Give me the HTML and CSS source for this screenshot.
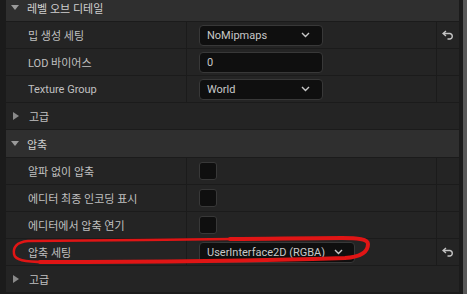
FILE: index.html
```html
<!DOCTYPE html>
<html>
<head>
    <title>Details</title>
    <link rel="stylesheet" href="styles.css">
</head>
<body>
    <div class="panel">
        <div class="details">
            <div class="section-head">
                <span class="arrow-down"></span>레벨 오브 디테일
            </div>
            <div class="prop">
                <div class="name">밉 생성 세팅</div>
                <div class="value">
                    <div class="combo">NoMipmaps<svg class="chev" width="9" height="6" viewBox="0 0 9 6"><path d="M1 1 L4.5 4.5 L8 1" /></svg></div>
                </div>
                <div class="reset">
                    <svg width="12" height="10" viewBox="0 0 12 10"><path d="M4 1 L1 3.5 L4 6 M1.5 3.5 H8 A2.8 2.8 0 0 1 8 9 H5.5" /></svg>
                </div>
            </div>
            <div class="prop">
                <div class="name">LOD 바이어스</div>
                <div class="value"><div class="combo">0</div></div>
                <div class="reset"></div>
            </div>
            <div class="prop">
                <div class="name">Texture Group</div>
                <div class="value">
                    <div class="combo">World<svg class="chev" width="9" height="6" viewBox="0 0 9 6"><path d="M1 1 L4.5 4.5 L8 1" /></svg></div>
                </div>
                <div class="reset"></div>
            </div>
            <div class="sub-head"><span class="arrow-right"></span>고급</div>

            <div class="section-head">
                <span class="arrow-down"></span>압축
            </div>
            <div class="prop">
                <div class="name">알파 없이 압축</div>
                <div class="value"><div class="check"></div></div>
                <div class="reset"></div>
            </div>
            <div class="prop">
                <div class="name">에디터 최종 인코딩 표시</div>
                <div class="value"><div class="check"></div></div>
                <div class="reset"></div>
            </div>
            <div class="prop">
                <div class="name">에디터에서 압축 연기</div>
                <div class="value"><div class="check"></div></div>
                <div class="reset"></div>
            </div>
            <div class="prop">
                <div class="name">압축 세팅</div>
                <div class="value">
                    <div class="combo wide">UserInterface2D (RGBA)<svg class="chev" width="9" height="6" viewBox="0 0 9 6"><path d="M1 1 L4.5 4.5 L8 1" /></svg></div>
                </div>
                <div class="reset">
                    <svg width="12" height="10" viewBox="0 0 12 10"><path d="M4 1 L1 3.5 L4 6 M1.5 3.5 H8 A2.8 2.8 0 0 1 8 9 H5.5" /></svg>
                </div>
            </div>
            <div class="sub-head"><span class="arrow-right"></span>고급</div>
        </div>
        <div class="scrollbar"><div class="thumb"></div></div>

        <!-- red annotation drawn over the panel -->
        <svg class="markup" width="467" height="294" viewBox="0 0 467 294">
            <path class="loop-top" d="M232 239 C170 240 80 240 28 241 C16 242 13 248 14 254 C15 260 24 262 45 262" />
            <path class="loop-bottom" d="M40 262 C120 262 250 261 345 258 C360 257 368 252 368 244 C368 239 358 238 342 238 C300 238 270 239 230 239" />
        </svg>
    </div>
</body>
</html>
```

FILE: styles.css
```css
body {
    margin: 0;
    background-color: #1b1b1b;
    font-family: Roboto, "Noto Sans CJK KR", sans-serif;
    font-size: 11px;
    color: #c0c0c0;
    overflow: hidden;
}
.panel {
    position: relative;
    display: flex;
    height: 294px;
    padding-left: 6px;
}
.details {
    width: 453px;
    margin-top: -6px;
}
.section-head {
    display: flex;
    align-items: center;
    height: 27px;
    background-color: #2f2f2f;
    border-bottom: 1px solid #1b1b1b;
    color: #cfcfcf;
}
.sub-head {
    display: flex;
    align-items: center;
    height: 26px;
    background-color: #242424;
    border-bottom: 1px solid #1b1b1b;
}
.arrow-down {
    width: 0;
    height: 0;
    margin: 0 8px 0 5px;
    border-left: 4.5px solid transparent;
    border-right: 4.5px solid transparent;
    border-top: 5px solid #9a9a9a;
}
.arrow-right {
    width: 0;
    height: 0;
    margin: 0 10px 0 7px;
    border-top: 4.5px solid transparent;
    border-bottom: 4.5px solid transparent;
    border-left: 6px solid #8a8a8a;
}
.prop {
    display: grid;
    grid-template-columns: 181px 250px 22px;
    height: 26px;
    background-color: #242424;
    border-bottom: 1px solid #1b1b1b;
}
.name {
    display: flex;
    align-items: center;
    padding-left: 22px;
    border-right: 1px solid #1b1b1b;
}
.value {
    display: flex;
    align-items: center;
    padding-left: 12px;
    border-right: 1px solid #1b1b1b;
}
.reset {
    display: flex;
    align-items: center;
    justify-content: center;
}
.reset svg path {
    fill: none;
    stroke: #c4c4c4;
    stroke-width: 1.4;
}
.combo {
    display: flex;
    align-items: center;
    justify-content: space-between;
    box-sizing: border-box;
    width: 124px;
    height: 21px;
    padding: 0 12px 0 7px;
    background-color: #0f0f0f;
    border: 1px solid #383838;
    border-radius: 4px;
    color: #c8c8c8;
}
.combo.wide {
    width: auto;
    padding-right: 11px;
    gap: 9px;
}
.chev path {
    fill: none;
    stroke: #c8c8c8;
    stroke-width: 1.4;
}
.check {
    box-sizing: border-box;
    width: 18px;
    height: 18px;
    background-color: #0f0f0f;
    border: 1px solid #383838;
    border-radius: 3px;
}
.scrollbar {
    display: flex;
    width: 8px;
    padding-left: 4px;
    box-sizing: border-box;
}
.thumb {
    width: 4px;
    background-color: #585858;
}
.markup {
    position: absolute;
    left: 0;
    top: 0;
    pointer-events: none;
}
.markup path {
    fill: none;
    stroke: #e01515;
    stroke-linecap: round;
}
.loop-top {
    stroke-width: 2.5;
}
.loop-bottom {
    stroke-width: 4;
}
```
